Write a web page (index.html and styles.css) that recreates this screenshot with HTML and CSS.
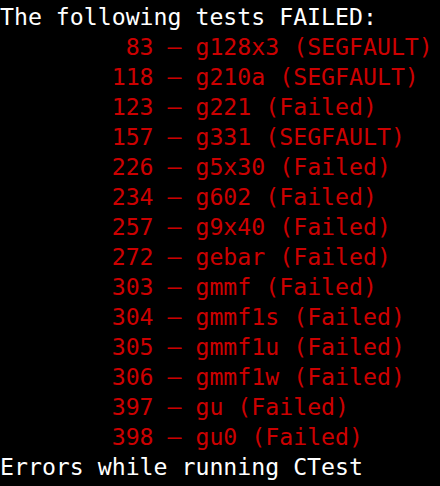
FILE: index.html
```html
<!DOCTYPE html>
<html>
<head>
<meta charset="utf-8">
<link rel="stylesheet" href="styles.css">
</head>
<body>
<pre class="term"><span class="w">The following tests FAILED:</span>
<span class="r">	 83 – g128x3 (SEGFAULT)</span>
<span class="r">	118 – g210a (SEGFAULT)</span>
<span class="r">	123 – g221 (Failed)</span>
<span class="r">	157 – g331 (SEGFAULT)</span>
<span class="r">	226 – g5x30 (Failed)</span>
<span class="r">	234 – g602 (Failed)</span>
<span class="r">	257 – g9x40 (Failed)</span>
<span class="r">	272 – gebar (Failed)</span>
<span class="r">	303 – gmmf (Failed)</span>
<span class="r">	304 – gmmf1s (Failed)</span>
<span class="r">	305 – gmmf1u (Failed)</span>
<span class="r">	306 – gmmf1w (Failed)</span>
<span class="r">	397 – gu (Failed)</span>
<span class="r">	398 – gu0 (Failed)</span>
<span class="w">Errors while running CTest</span></pre>
</body>
</html>
```

FILE: styles.css
```css
html, body {
  margin: 0;
  padding: 0;
  background: #000;
  width: 440px;
  height: 486px;
  overflow: hidden;
}
.term {
  margin: 0;
  padding: 2px 0 0 0;
  font-family: "DejaVu Sans Mono", monospace;
  font-size: 23.2px;
  line-height: 30px;
  tab-size: 8;
  color: #fff;
}
.w { color: #ffffff; }
.r { color: #cc0000; }
```
